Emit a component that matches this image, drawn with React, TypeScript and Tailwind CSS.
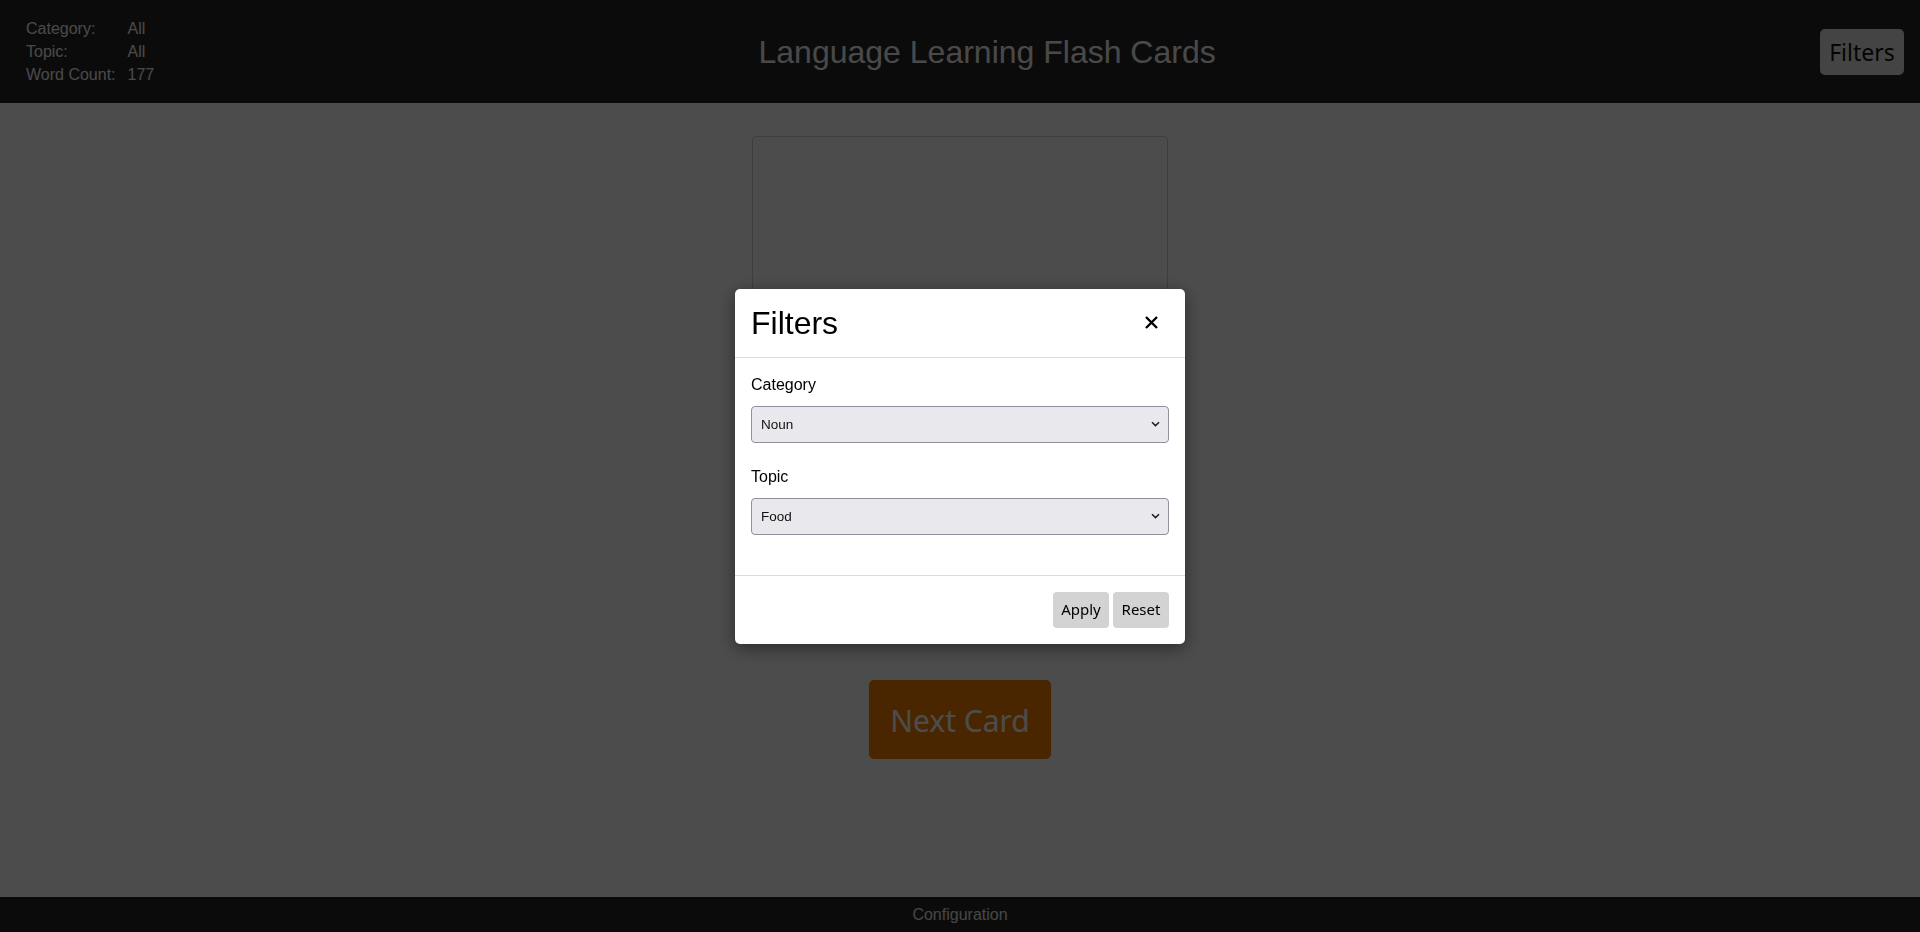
import { useState } from 'react';

const sans = { fontFamily: '"Liberation Sans", Arial, sans-serif' };

function Chevron() {
  return (
    <svg
      width="9"
      height="6"
      viewBox="0 0 9 6"
      className="pointer-events-none absolute right-[9px] top-1/2 -translate-y-1/2"
    >
      <path d="M1 1.2 L4.5 4.6 L8 1.2" fill="none" stroke="#1f1f1f" strokeWidth="1.5" />
    </svg>
  );
}

function FilterSelect({
  label,
  value,
  options,
  onChange,
}: {
  label: string;
  value: string;
  options: string[];
  onChange: (v: string) => void;
}) {
  return (
    <div className="mb-6">
      <label className="mb-[11px] block text-[16px] leading-[20px] text-black">{label}</label>
      <div className="relative">
        <select
          value={value}
          onChange={(e) => onChange(e.target.value)}
          className="block h-[37px] w-full appearance-none rounded-[4px] border border-[#8f8f9d] bg-[#e9e9ed] pl-[9px] pt-[2px] text-[13.5px] text-[#111] outline-none"
          style={sans}
        >
          {options.map((o) => (
            <option key={o} value={o}>
              {o}
            </option>
          ))}
        </select>
        <Chevron />
      </div>
    </div>
  );
}

export default function App() {
  const [category, setCategory] = useState('Noun');
  const [topic, setTopic] = useState('Food');

  return (
    <div className="flex h-screen flex-col overflow-hidden bg-white" style={sans}>
      <header className="flex h-[103px] shrink-0 items-center justify-between bg-[#252525] pl-[26px] pr-4">
        <div className="grid grid-cols-[auto_auto] gap-x-3 text-[16px] leading-[23px] text-[#f5f5f5]">
          <span>Category:</span>
          <span>All</span>
          <span>Topic:</span>
          <span>All</span>
          <span>Word Count:</span>
          <span>177</span>
        </div>
        <h1 className="text-[32px] leading-[40px] text-[#f5f5f5]">Language Learning Flash Cards</h1>
        <button
          className="flex h-[46px] w-[84px] items-center justify-center rounded-[5px] bg-[#e3e3e3] pt-[2px] text-[23px] text-[#111]"
          style={{ fontFamily: '"Noto Sans", sans-serif' }}
        >
          Filters
        </button>
      </header>

      <main className="flex flex-1 flex-col items-center">
        <div className="mt-[33px] h-[500px] w-[416px] rounded-[4px] border border-[#cfcfcf]" />
        <button
          className="mt-[44px] flex h-[79px] w-[182px] items-center justify-center rounded-[5px] bg-[#f77f00] pt-[2px] text-[30px] text-white"
          style={{ fontFamily: '"Noto Sans", sans-serif' }}
        >
          Next Card
        </button>
      </main>

      <footer className="flex h-[35px] shrink-0 items-center justify-center bg-[#252525] text-[16px] text-[#ebebeb]">
        Configuration
      </footer>

      <div className="fixed inset-0 flex items-center justify-center bg-black/70">
        <div className="w-[450px] rounded-[5px] bg-white shadow-[0_4px_18px_rgba(0,0,0,0.45)]">
          <div className="flex h-[69px] items-center justify-between border-b border-[#dcdcdc] pl-4 pr-4">
            <h2 className="text-[32px] leading-[38px] text-black">Filters</h2>
            <button className="flex h-9 w-9 items-center justify-center" aria-label="Close">
              <svg width="13" height="13" viewBox="0 0 13 13">
                <path d="M1 1 L12 12 M12 1 L1 12" stroke="#000" strokeWidth="2.4" />
              </svg>
            </button>
          </div>
          <div className="px-4 pb-4 pt-[17px]">
            <FilterSelect
              label="Category"
              value={category}
              options={['All', 'Noun', 'Verb', 'Adjective']}
              onChange={setCategory}
            />
            <FilterSelect
              label="Topic"
              value={topic}
              options={['All', 'Food', 'Travel', 'Family']}
              onChange={setTopic}
            />
          </div>
          <div className="flex justify-end gap-1 border-t border-[#dcdcdc] px-4 pb-4 pt-4">
            <button
              className="flex h-9 w-14 items-center justify-center rounded-[4px] bg-[#d3d3d3] text-[15px] text-black"
              style={{ fontFamily: '"Noto Sans", sans-serif' }}
            >
              Apply
            </button>
            <button
              className="flex h-9 w-14 items-center justify-center rounded-[4px] bg-[#d3d3d3] text-[15px] text-black"
              style={{ fontFamily: '"Noto Sans", sans-serif' }}
            >
              Reset
            </button>
          </div>
        </div>
      </div>
    </div>
  );
}
